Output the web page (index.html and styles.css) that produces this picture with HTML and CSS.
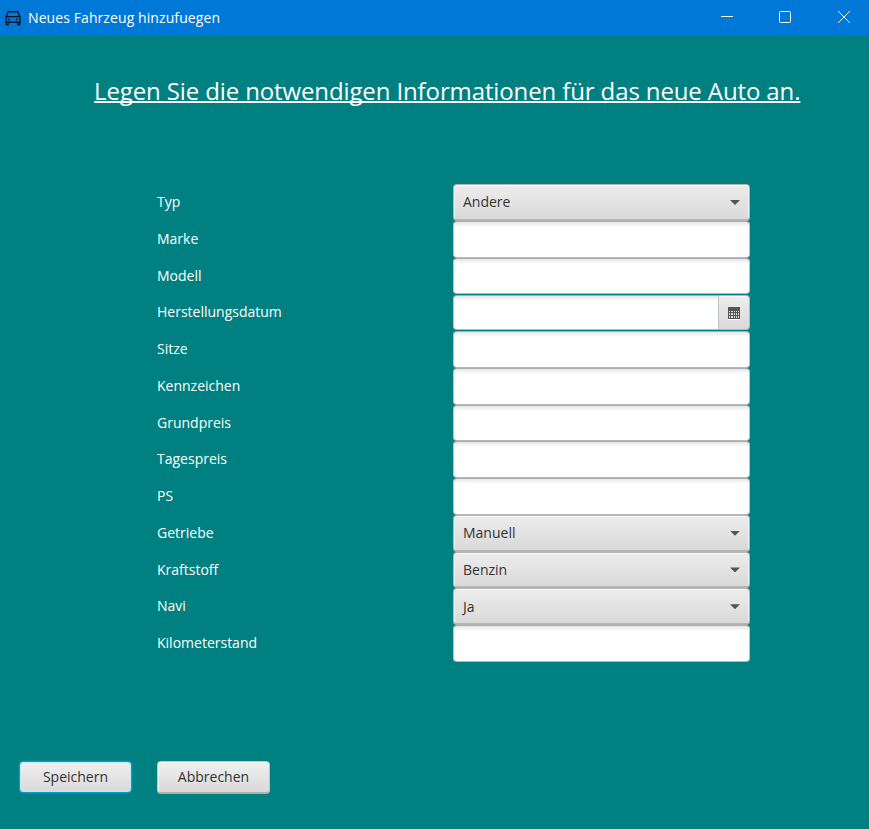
FILE: index.html
```
<!DOCTYPE html>
<html lang="de">
<head>
<meta charset="utf-8">
<title>Neues Fahrzeug hinzufuegen</title>
<link rel="stylesheet" href="styles.css">
</head>
<body>
<header class="titlebar">
  <svg class="car" width="16" height="16" viewBox="0 0 16 16" fill="none" stroke="#061626" stroke-width="1.4"><path d="M1 7.4 3.2 1.7h9.6L15 7.4v4.9H1zM1.3 6.6h13.4"/><path d="M1.2 12v2.7h2V12M12.8 12v2.7h2V12" stroke-width="1.2"/><path d="M3.2 9.5h2M10.8 9.5h2M4.2 8.5v2M11.8 8.5v2" stroke-width="1.1"/></svg>
  <span class="caption">Neues Fahrzeug hinzufuegen</span>
  <div class="controls">
    <svg width="58" height="36" viewBox="0 0 58 36"><path d="M20 16.5h12"/></svg>
    <svg width="58" height="36" viewBox="0 0 58 36"><rect x="20.5" y="11.5" width="11" height="11" rx="1"/></svg>
    <svg width="58" height="36" viewBox="0 0 58 36"><path d="m21 11 12 12M33 11 21 23"/></svg>
  </div>
</header>
<main>
  <h1><span>Legen Sie die notwendigen Informationen für das neue Auto an.</span></h1>
  <div class="form">
    <label>Typ</label><div class="combo"><span>Andere</span><i></i></div>
    <label>Marke</label><div class="field"></div>
    <label>Modell</label><div class="field"></div>
    <label>Herstellungsdatum</label><div class="date"><div class="field"></div><div class="cal"><svg width="12" height="13" viewBox="0 0 12 13" shape-rendering="crispEdges"><path fill="#fff" d="M0 12h12v1H0z"/><path fill="#555" d="M0 0h12v12H0z"/><path fill="#d9d9d9" d="M1 4h1v1H1zM3 4h2v1H3zM6 4h1v1H6zM8 4h1v1H8zM10 4h1v1h-1zM1 6h1v2H1zM3 6h2v2H3zM6 6h1v2H6zM8 6h1v2H8zM10 6h1v2h-1zM1 9h1v2H1zM3 9h2v2H3zM6 9h1v2H6zM8 9h1v2H8zM10 9h1v2h-1z"/></svg></div></div>
    <label>Sitze</label><div class="field"></div>
    <label>Kennzeichen</label><div class="field"></div>
    <label>Grundpreis</label><div class="field"></div>
    <label>Tagespreis</label><div class="field"></div>
    <label>PS</label><div class="field"></div>
    <label>Getriebe</label><div class="combo"><span>Manuell</span><i></i></div>
    <label>Kraftstoff</label><div class="combo"><span>Benzin</span><i></i></div>
    <label>Navi</label><div class="combo"><span>Ja</span><i></i></div>
    <label>Kilometerstand</label><div class="field"></div>
  </div>
  <div class="actions">
    <button class="save">Speichern</button>
    <button class="cancel">Abbrechen</button>
  </div>
</main>
</body>
</html>
```
FILE: styles.css
```
* { box-sizing: border-box; }
body {
  margin: 0;
  width: 869px;
  height: 829px;
  overflow: hidden;
  background: #008080;
  color: #fff;
  font: 14px/20px "Open Sans", "Noto Sans", sans-serif;
}
.titlebar {
  display: flex;
  align-items: center;
  height: 36px;
  padding-left: 5px;
  background: #0078d7;
}
.caption { margin-left: 7px; letter-spacing: 0.09px; }
.controls { display: flex; margin: 0 -6px 0 auto; }
.controls svg { display: block; fill: none; stroke: #fff; stroke-width: 1; }
h1 {
  margin: 0;
  padding: 37px 0 0 94px;
  height: 148px;
  font-size: 24px;
  font-weight: 400;
  letter-spacing: -0.12px;
  line-height: 36px;
  white-space: nowrap;
}
h1 span {
  text-decoration: underline;
  text-decoration-skip-ink: none;
  text-decoration-thickness: 2px;
  text-underline-offset: 1px;
}
.form {
  display: grid;
  grid-template-columns: 296px 297px;
  grid-auto-rows: 36.75px;
  padding-left: 157px;
}
label { line-height: 36.6px; }
.field {
  height: 100%;
  background: linear-gradient(#e6e6e6, #fff 5px);
  border: 1px solid #bcc4c4;
  border-top-color: #a8adad;
  border-bottom-color: #b5b9b9;
  border-radius: 4px;
}
.combo {
  display: flex;
  align-items: center;
  justify-content: space-between;
  height: 100%;
  padding: 1px 9px 0;
  color: #333;
  background: linear-gradient(#ededed, #d9d9d9);
  border: 1px solid #b5b5b5;
  border-bottom-width: 2px;
  border-radius: 4px;
  box-shadow: inset 0 1px #fafafa, inset 1px 0 #eee, inset -1px 0 #eee;
}
.combo i {
  width: 10px;
  height: 5px;
  background: #555;
  clip-path: polygon(0 0, 100% 0, 50% 100%);
}
.date { display: flex; height: 100%; padding: 1px 0; }
.date .field { flex: 1; border-radius: 4px 0 0 4px; }
.cal {
  display: flex;
  align-items: center;
  justify-content: center;
  width: 31px;
  padding-top: 1px;
  background: linear-gradient(#ededed, #d9d9d9);
  border: 1px solid #b5b5b5;
  border-left-width: 0;
  border-radius: 0 4px 4px 0;
  box-shadow: inset 0 1px #fafafa;
}
.actions { display: flex; gap: 25px; padding: 99px 0 0 19px; }
button {
  height: 33px;
  padding: 0;
  font: inherit;
  color: #333;
  background: linear-gradient(#f0f0f0, #d9d9d9);
  border-radius: 4px;
}
.save {
  width: 113px;
  height: 32px;
  border: 1px solid #039ed3;
  box-shadow: 0 0 2px #039ed3, inset 0 0 0 1px #bfe6f5;
}
.cancel {
  width: 113px;
  border: 1px solid #c4c4c4;
  border-bottom: 2px solid #b0b0b0;
  box-shadow: inset 0 1px #fff, inset 1px 0 #f6f6f6;
}
```
